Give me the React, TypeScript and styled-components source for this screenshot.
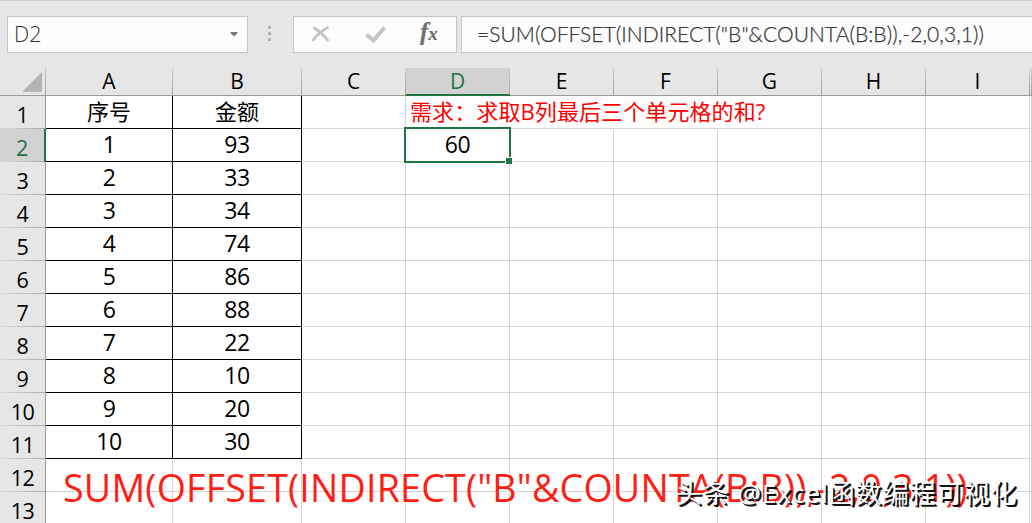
import React from "react";
import styled, { createGlobalStyle, css } from "styled-components";

const sans = `"Open Sans", "Noto Sans CJK SC", sans-serif`;
const green = "#217346";

const columns = [
  { name: "A", width: 127 },
  { name: "B", width: 129 },
  { name: "C", width: 104 },
  { name: "D", width: 104 },
  { name: "E", width: 104 },
  { name: "F", width: 104 },
  { name: "G", width: 104 },
  { name: "H", width: 104 },
  { name: "I", width: 104 },
  { name: "", width: 2 },
];

const amounts = ["93", "33", "34", "74", "86", "88", "22", "10", "20", "30"];

const Global = createGlobalStyle`
  body { margin: 0; background: #e6e6e6; overflow: hidden; }
  * { box-sizing: border-box; }
`;

const Window = styled.div`
  position: relative;
  width: 1032px;
  height: 523px;
  overflow: hidden;
  background: #e6e6e6;
  font-family: ${sans};
  color: #000;
`;

const Toolbar = styled.div`
  display: flex;
  height: 68px;
  padding: 15px 0 0 7px;
  border-top: 1px solid #d0d0d0;
`;

const Field = styled.div<{ $width: number }>`
  display: flex;
  flex: none;
  align-items: center;
  width: ${(p) => p.$width}px;
  height: 37px;
  border: 1px solid #c6c6c6;
  background: #fdfdfd;
  color: #333;
`;

const NameBox = styled(Field)`
  justify-content: space-between;
  padding: 0 9px 0 6px;
  font: 300 21.5px/34px ${sans};
`;

const NameText = styled.span`
  padding-bottom: 2px;
`;

const Grip = styled.div`
  display: flex;
  flex-direction: column;
  gap: 3px;
  width: 45px;
  padding: 10px 0 0 20px;
`;

const GripDot = styled.i`
  width: 3px;
  height: 3px;
  background: #b1b1b1;
`;

const Buttons = styled(Field)`
  margin-right: 4px;
`;

const FormulaField = styled(Field)`
  padding: 0 0 2px 15px;
  border-right: 0;
  font: 300 21px/34px Lato, sans-serif;
  letter-spacing: 0.06px;
  white-space: pre;
  -webkit-text-stroke: 0.25px #444;
`;

const Sheet = styled.div`
  display: flex;
  flex-direction: column;
`;

const HeaderRow = styled.div`
  display: flex;
  height: 28px;
`;

const Corner = styled.div`
  display: flex;
  flex: none;
  align-items: flex-end;
  justify-content: flex-end;
  width: 46px;
  padding: 0 3px 3px 0;
  border-bottom: 1px solid #9b9b9b;
  border-right: 1px solid;
  border-image: linear-gradient(#c8c8c8, #9b9b9b) 1;
`;

const ColumnHead = styled.div<{ $width: number; $active: boolean }>`
  flex: none;
  width: ${(p) => p.$width}px;
  padding-right: 1px;
  background:
    linear-gradient(#cfcfcf, #9b9b9b) right / 1px 100% no-repeat,
    ${(p) => (p.$active ? "#d2d2d2" : "#e6e6e6")};
  border-bottom: ${(p) => (p.$active ? `2px solid ${green}` : "1px solid #9b9b9b")};
  color: ${(p) => (p.$active ? green : "#000")};
  font-size: 21px;
  line-height: 27px;
  text-align: center;
`;

const Row = styled.div`
  display: flex;
  height: 33px;
`;

const RowHead = styled.div<{ $active: boolean }>`
  flex: none;
  width: 46px;
  background:
    linear-gradient(90deg, #dadada, #ababab) bottom / 100% 1px no-repeat,
    ${(p) => (p.$active ? "#d2d2d2" : "#e6e6e6")};
  border-right: ${(p) => (p.$active ? `2px solid ${green}` : "1px solid #9b9b9b")};
  color: ${(p) => (p.$active ? green : "#000")};
  font-size: 21.5px;
  line-height: 38px;
  letter-spacing: -0.5px;
  text-align: center;
`;

const Cell = styled.div<{ $width: number; $boxed?: boolean; $open?: boolean }>`
  flex: none;
  width: ${(p) => p.$width}px;
  background: #fff;
  border-bottom: 1px solid #d4d4d4;
  border-right: 1px solid ${(p) => (p.$open ? "#fff" : "#d4d4d4")};
  font-size: 23px;
  line-height: 30px;
  letter-spacing: -0.5px;
  text-align: center;
  white-space: nowrap;
  ${(p) => p.$boxed && css`border-color: #000;`}
`;

const Title = styled.span`
  font-size: 22px;
  letter-spacing: 0;
`;

const Request = styled.span`
  position: relative;
  display: block;
  width: 400px;
  padding-left: 4px;
  color: #f00;
  font-size: 22px;
  letter-spacing: 0.1px;
  text-align: left;
`;

const Selection = styled.div`
  position: absolute;
  left: 404px;
  top: 127px;
  width: 107px;
  height: 36px;
  border: 2px solid ${green};
`;

const Handle = styled.div`
  position: absolute;
  right: -4px;
  bottom: -4px;
  width: 8px;
  height: 8px;
  border: 1px solid #fff;
  background: ${green};
`;

const Caption = styled.div`
  position: absolute;
  left: 63px;
  top: 463px;
  color: #ff1e14;
  font: 400 37.5px/50px ${sans};
  letter-spacing: 0.24px;
  white-space: pre;
`;

const Watermark = styled.div`
  position: absolute;
  left: 676px;
  top: 475px;
  color: #fff;
  font: 400 26px/36px "Open Sans", "Noto Sans CJK SC", sans-serif;
  letter-spacing: 1px;
  text-shadow: 2px 2px 0 #111, 1px 1px 0 #111;
  white-space: pre;
`;

function cellText(row: number, column: string) {
  if (row > 11) return "";
  if (column === "A") return row === 1 ? <Title>序号</Title> : String(row - 1);
  if (column === "B") return row === 1 ? <Title>金额</Title> : amounts[row - 2];
  if (column === "D" && row === 2) return "60";
  return "";
}

export default function App() {
  return (
    <Window>
      <Global />
      <Toolbar>
        <NameBox $width={241}>
          <NameText>D2</NameText>
          <svg width="8" height="5" viewBox="0 0 8 5">
            <path d="M0.500 0h7v1L4 4.500L0.500 1z" fill="#777" />
          </svg>
        </NameBox>
        <Grip>
          <GripDot />
          <GripDot />
          <GripDot />
        </Grip>
        <Buttons $width={164}>
          <svg width="162" height="35" viewBox="0 0 162 35">
            <path d="M19.500 10.500Q27 15 34.500 24M34.500 10Q25 15 18.500 24" fill="none" stroke="#c3c3c3" strokeWidth="2.700" />
            <path d="M72.500 17.500L79.500 23.500L90.500 10.500" fill="none" stroke="#c3c3c3" strokeWidth="4" />
            <text x="126" y="23" fill="#707070" stroke="#707070" strokeWidth="0.200" fontFamily="Liberation Serif, serif" fontStyle="italic" fontWeight="700" fontSize="25">
              f<tspan fontSize="19">x</tspan>
            </text>
          </svg>
        </Buttons>
        <FormulaField $width={571}>{'=SUM(OFFSET(INDIRECT("B"&COUNTA(B:B)),-2,0,3,1))'}</FormulaField>
      </Toolbar>
      <Sheet>
        <HeaderRow>
          <Corner>
            <svg width="20" height="20" viewBox="0 0 20 20">
              <path d="M20 0v20H0z" fill="#b4b4b4" />
            </svg>
          </Corner>
          {columns.map((c) => (
            <ColumnHead key={c.name} $width={c.width} $active={c.name === "D"}>
              {c.name}
            </ColumnHead>
          ))}
        </HeaderRow>
        {Array.from({ length: 13 }, (_, i) => i + 1).map((row) => (
          <Row key={row}>
            <RowHead $active={row === 2}>{row}</RowHead>
            {columns.map((c) => (
              <Cell
                key={c.name}
                $width={c.width}
                $boxed={row <= 11 && (c.name === "A" || c.name === "B")}
                $open={row === 1 && ["D", "E", "F"].includes(c.name)}
              >
                {row === 1 && c.name === "D" ? (
                  <Request>需求：求取B列最后三个单元格的和?</Request>
                ) : (
                  cellText(row, c.name)
                )}
              </Cell>
            ))}
          </Row>
        ))}
      </Sheet>
      <Selection>
        <Handle />
      </Selection>
      <Caption>{'SUM(OFFSET(INDIRECT("B"&COUNTA(B:B)),-2,0,3,1))'}</Caption>
      <Watermark>头条 @Excel函数编程可视化</Watermark>
    </Window>
  );
}
